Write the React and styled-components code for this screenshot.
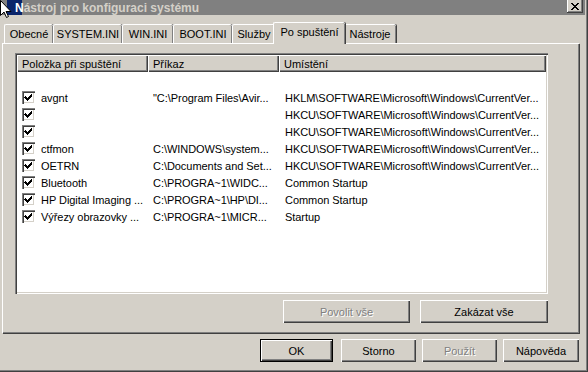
import React from 'react';
import styled, { createGlobalStyle, css } from 'styled-components';

const FACE = '#d4d0c8';
const SHADOW = '#808080';
const DARK = '#404040';

const Global = createGlobalStyle`
  html, body { margin: 0; padding: 0; background: ${FACE}; }
  body {
    width: 588px; height: 372px; overflow: hidden;
    font-family: "Liberation Sans", Arial, sans-serif;
    font-size: 11px; color: #000;
  }
  * { box-sizing: border-box; }
`;

const Window = styled.div`
  position: relative;
  width: 588px;
  height: 372px;
  background: ${FACE};
  padding: 0 3px 2px 0;
  display: flex;
  flex-direction: column;
  box-shadow: inset -1px -1px ${DARK}, inset -2px -2px ${SHADOW};
  overflow: hidden;
`;

const TitleBar = styled.div`
  height: 15px;
  background: #808080;
  display: flex;
  align-items: center;
  padding-left: 7px;
  flex-shrink: 0;
`;

const AppIcon = styled.div`
  width: 15px;
  height: 15px;
  background: #0a246a;
  flex-shrink: 0;
`;

const Title = styled.div`
  margin-left: -7px;
  font-weight: bold;
  font-size: 12px;
  color: ${FACE};
  white-space: nowrap;
  position: relative;
  & > b { color: #fff; }
`;

const CloseBtn = styled.div`
  margin-left: auto;
  margin-right: 2px;
  align-self: flex-start;
  width: 16px;
  height: 13px;
  background: ${FACE};
  box-shadow: inset -1px -1px ${DARK}, inset 1px 0 #fff, inset -2px -2px ${SHADOW};
  display: flex;
  align-items: center;
  justify-content: center;
`;

const Body = styled.div`
  flex: 1;
  display: flex;
  flex-direction: column;
  padding: 7px 0 0 2px;
`;

const TabStrip = styled.div`
  display: flex;
  padding-left: 2px;
  height: 21px;
  position: relative;
  z-index: 1;
`;

const Tab = styled.div`
  width: ${p => p.$w}px;
  height: 19px;
  margin-top: 2px;
  display: flex;
  align-items: center;
  justify-content: center;
  white-space: nowrap;
  background: ${FACE};
  border-top: 1px solid #fff;
  border-left: 1px solid #fff;
  border-top-left-radius: 2px;
  border-top-right-radius: 2px;
  box-shadow: inset -1px 0 ${SHADOW}, 1px 0 ${DARK};
  padding-bottom: 1px;
  ${p => p.$active && css`
    width: ${p.$w + 4}px;
    height: 22px;
    margin: 0 -2px -1px;
    position: relative;
    z-index: 2;
    padding-bottom: 3px;
  `}
`;

const Panel = styled.div`
  width: 577px;
  height: 290px;
  background: ${FACE};
  border-top: 1px solid #fff;
  border-left: 1px solid #fff;
  box-shadow: inset -1px -1px ${SHADOW}, 1px 1px ${DARK};
  padding: 9px 31px 0 12px;
  display: flex;
  flex-direction: column;
`;

const ListView = styled.div`
  height: 241px;
  background: #fff;
  padding: 2px;
  box-shadow: inset 1px 1px ${SHADOW}, inset 2px 2px ${DARK}, inset -1px -1px #fff, inset -2px -2px ${FACE};
  display: flex;
  flex-direction: column;
`;

const HeaderRow = styled.div`
  display: flex;
  height: 17px;
  flex-shrink: 0;
`;

const HeaderCell = styled.div`
  ${p => (p.$w ? `width: ${p.$w}px;` : 'flex: 1;')}
  background: ${FACE};
  box-shadow: inset 1px 1px #fff, inset -1px -1px ${DARK}, inset -2px -2px ${SHADOW};
  padding: 1px 0 0 5px;
  display: flex;
  align-items: center;
  white-space: nowrap;
  overflow: hidden;
`;

const Rows = styled.div`
  padding-top: 17px;
  display: flex;
  flex-direction: column;
`;

const Row = styled.div`
  display: flex;
  height: 17px;
  align-items: center;
`;

const Cell = styled.div`
  ${p => (p.$w ? `width: ${p.$w}px;` : 'flex: 1;')}
  padding-left: ${p => p.$pl || 5}px;
  white-space: nowrap;
  overflow: hidden;
  display: flex;
  align-items: center;
  letter-spacing: -0.05px;
`;

const CheckBox = styled.div`
  width: 13px;
  height: 13px;
  flex-shrink: 0;
  background: #fff;
  box-shadow: inset 1px 1px ${SHADOW}, inset 2px 2px ${DARK}, inset -1px -1px #fff, inset -2px -2px ${FACE};
  margin-right: 6px;
  display: flex;
`;

const ButtonRow = styled.div`
  display: flex;
  justify-content: flex-end;
  gap: ${p => p.$gap || 6}px;
  margin-top: ${p => p.$mt || 6}px;
  margin-right: ${p => p.$mr || 0}px;
`;

const Button = styled.div`
  width: ${p => p.$w}px;
  height: 23px;
  background: ${FACE};
  display: flex;
  align-items: center;
  justify-content: center;
  white-space: nowrap;
  box-shadow: inset 1px 1px #fff, inset -1px -1px ${DARK}, inset -2px -2px ${SHADOW};
  ${p => p.$disabled && css`
    color: ${SHADOW};
    text-shadow: 1px 1px #fff;
  `}
  ${p => p.$default && css`
    border: 1px solid #000;
  `}
`;

const Cursor = styled.svg`
  position: absolute;
  left: 0;
  top: 0;
  z-index: 10;
`;

const tabs = [
  { label: 'Obecné', w: 49 },
  { label: 'SYSTEM.INI', w: 69 },
  { label: 'WIN.INI', w: 51 },
  { label: 'BOOT.INI', w: 59 },
  { label: 'Služby', w: 43 },
  { label: 'Po spuštění', w: 68, active: true },
  { label: 'Nástroje', w: 53 },
];

const HK = 'SOFTWARE\\Microsoft\\Windows\\CurrentVer...';
const rows = [
  { name: 'avgnt', cmd: '"C:\\Program Files\\Avir...', loc: 'HKLM\\' + HK },
  { name: '', cmd: '', loc: 'HKCU\\' + HK },
  { name: '', cmd: '', loc: 'HKCU\\' + HK },
  { name: 'ctfmon', cmd: 'C:\\WINDOWS\\system...', loc: 'HKCU\\' + HK },
  { name: 'OETRN', cmd: 'C:\\Documents and Set...', loc: 'HKCU\\' + HK },
  { name: 'Bluetooth', cmd: 'C:\\PROGRA~1\\WIDC...', loc: 'Common Startup' },
  { name: 'HP Digital Imaging ...', cmd: 'C:\\PROGRA~1\\HP\\DI...', loc: 'Common Startup' },
  { name: 'Výřezy obrazovky ...', cmd: 'C:\\PROGRA~1\\MICR...', loc: 'Startup' },
];

const Check = () => (
  <svg width="13" height="13" viewBox="0 0 13 13" shapeRendering="crispEdges">
    <path d="M3 5h1v1h1v1h1v-1h1v-1h1v-1h1v-1h1v3h-1v1h-1v1h-1v1h-1v1h-1v-1h-1v-1h-1v-1h-1z" fill="#000" />
  </svg>
);

export default function App() {
  return (
    <>
      <Global />
      <Window>
        <Cursor width="13" height="19" viewBox="0 0 13 19">
          <path d="M0.5 0.5 L0.5 15.5 L4 12 L6.5 17.5 L8.5 16.5 L6 11.5 L11 11.5 Z" fill="#fff" stroke="#000" strokeWidth="1" />
        </Cursor>
        <TitleBar>
          <AppIcon />
          <Title><b>N</b>ástroj pro konfiguraci systému</Title>
          <CloseBtn>
            <svg width="8" height="7" viewBox="0 0 8 7" shapeRendering="crispEdges">
              <path d="M0 0h2v1h1v1h2v-1h1v-1h2v1h-1v1h-1v1h-1v1h1v1h1v1h1v1h-2v-1h-1v-1h-2v1h-1v1h-2v-1h1v-1h1v-1h1v-1h-1v-1h-1v-1h-1z" fill="#000" />
            </svg>
          </CloseBtn>
        </TitleBar>
        <Body>
          <TabStrip>
            {tabs.map(t => (
              <Tab key={t.label} $w={t.w} $active={t.active}>{t.label}</Tab>
            ))}
          </TabStrip>
          <Panel>
            <ListView>
              <HeaderRow>
                <HeaderCell $w={131}>Položka při spuštění</HeaderCell>
                <HeaderCell $w={131}>Příkaz</HeaderCell>
                <HeaderCell>Umístění</HeaderCell>
              </HeaderRow>
              <Rows>
                {rows.map((r, i) => (
                  <Row key={i}>
                    <Cell $w={131} $pl={5}>
                      <CheckBox><Check /></CheckBox>
                      {r.name}
                    </Cell>
                    <Cell $w={131} $pl={5}>{r.cmd}</Cell>
                    <Cell $pl={6}>{r.loc}</Cell>
                  </Row>
                ))}
              </Rows>
            </ListView>
            <ButtonRow $gap={10}>
              <Button $w={127} $disabled>Povolit vše</Button>
              <Button $w={128}>Zakázat vše</Button>
            </ButtonRow>
          </Panel>
          <ButtonRow $mr={6} $mt={6}>
            <Button $w={73} $default style={{ marginRight: 2 }}>OK</Button>
            <Button $w={75}>Storno</Button>
            <Button $w={75} $disabled>Použít</Button>
            <Button $w={76}>Nápověda</Button>
          </ButtonRow>
        </Body>
      </Window>
    </>
  );
}
